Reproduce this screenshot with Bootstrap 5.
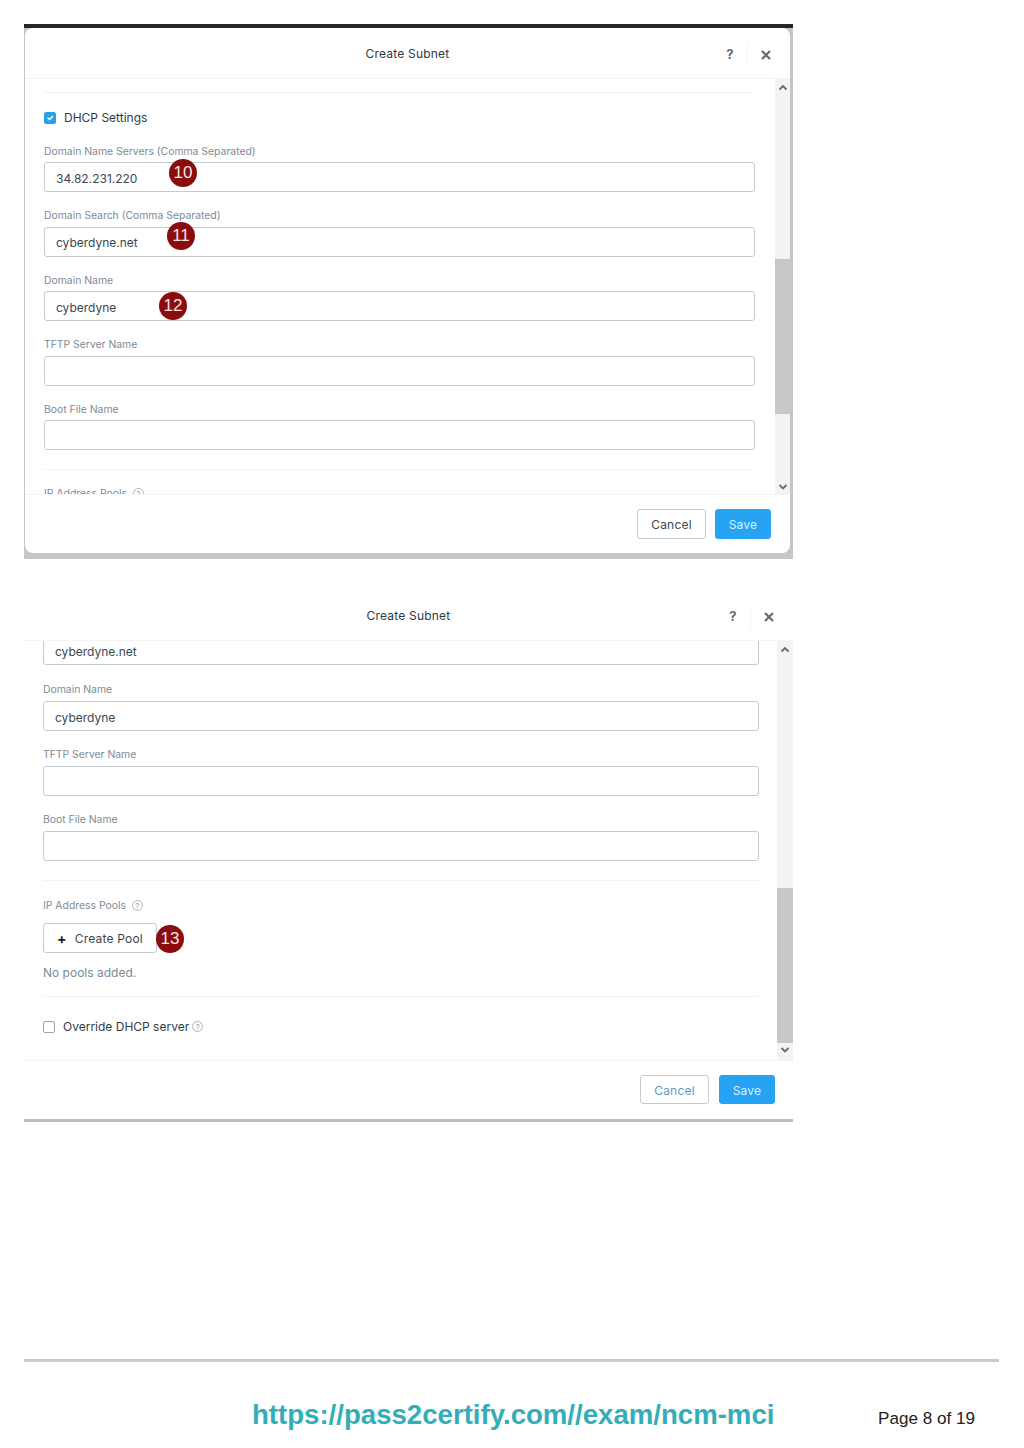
<!DOCTYPE html>
<html lang="en">
  <head>
    <meta charset="UTF-8" />
    <meta name="viewport" content="width=device-width, initial-scale=1.0" />
    <title>Create Subnet</title>
    <link
      href="https://cdn.jsdelivr.net/npm/bootstrap@5.3.0/dist/css/bootstrap.min.css"
      rel="stylesheet"
    />
    <style>
      body {
        font-family: Inter, "Liberation Sans", sans-serif;
        font-size: 12px;
        color: #3d4f5c;
        background: #fff;
      }
      .page-wrap {
        height: 1448px;
        padding: 24px 25px 0 24px;
      }
      /* first screenshot, with the dark bar and grey edge */
      .shot-one {
        width: 769px;
        height: 535px;
        padding: 0 3px 6px 1px;
        background: #c6c6c6;
        border-top: 4px solid #262626;
      }
      .shot-one .dialog-box {
        height: 525px;
        border-radius: 8px;
      }
      .shot-one .field-title {
        height: 17.5px;
      }
      .shot-two {
        width: 769px;
        height: 532px;
        margin-top: 31px;
        border-bottom: 3px solid #bdbdbd;
      }
      .dialog-box {
        background: #fff;
      }
      .dialog-head {
        height: 51px;
        padding-top: 2px;
        border-bottom: 1px solid #f2f4f5;
      }
      .dialog-title {
        font-size: 12px;
        color: #2b3a45;
        letter-spacing: 0.2px;
      }
      .head-tools {
        top: 2px;
        right: 19px;
        height: 50px;
      }
      .tool-help {
        width: 18px;
        font-size: 13px;
        font-weight: 700;
        color: #5f6d77;
        text-align: center;
      }
      .tool-sep {
        width: 1px;
        height: 22px;
        background: #f2f4f5;
      }
      .tool-close {
        margin-left: 5px;
      }
      .dialog-main {
        height: 415px;
      }
      .shot-two .dialog-main {
        height: 419px;
      }
      .form-area {
        flex: 1 1 auto;
        min-width: 0;
        padding: 0 20px 0 19px;
        overflow: hidden;
      }
      .shot-two .form-area {
        padding: 0 18px 0 19px;
      }
      .thin-rule {
        height: 1px;
        margin: 0;
        background: #f1f3f4;
        border: 0;
        opacity: 1;
      }
      .top-rule {
        margin-top: 13px;
        margin-bottom: 15px;
      }
      .check-row {
        height: 18px;
        margin-bottom: 15.75px;
        padding-top: 1px;
        color: #2f3d47;
      }
      .check-row .form-check-input {
        width: 12px;
        height: 12px;
        margin: 0 8px 0 0;
        border-color: #9aa5ad;
        border-radius: 2px;
      }
      .check-row .form-check-input:checked {
        background-color: #26a3e8;
        border-color: #26a3e8;
      }
      .override-row {
        margin-top: 20px;
      }
      .field-title {
        display: block;
        height: 18px;
        margin-bottom: 3px;
        font-size: 10.4px;
        line-height: 19px;
        color: #7d8b95;
      }
      .field-input {
        height: 30px;
        padding: 2px 11px 0;
        margin-bottom: 14px;
        font-size: 12px;
        color: #3a4751;
        border-color: #c4cbd0;
        border-radius: 3px;
        box-shadow: none;
      }
      .clip-input {
        margin-top: -6px;
        margin-bottom: 15px;
      }
      .last-input {
        margin-bottom: 19px;
      }
      .pools-title {
        margin-top: 14px;
      }
      .shot-two .pools-title {
        margin-top: 15px;
      }
      .shot-two .pools-title.mb-2 {
        margin-bottom: 9px !important;
      }
      .help-dot {
        display: inline-block;
        width: 11px;
        height: 11px;
        margin-left: 3px;
        font-size: 8px;
        line-height: 10px;
        text-align: center;
        color: #9aa5ad;
        vertical-align: 0;
        border: 1px solid #aab3ba;
        border-radius: 50%;
      }
      .step-dot {
        position: absolute;
        z-index: 2;
        width: 28px;
        height: 28px;
        font-family: "Liberation Sans", Arial, sans-serif;
        font-size: 17px;
        line-height: 27px;
        text-align: center;
        color: #f5e6e6;
        background: #8a0c0c;
        border-radius: 50%;
      }
      .add-btn {
        width: 114px;
        height: 30px;
        padding: 1px 0 0;
        font-size: 12px;
        color: #3a4751;
        letter-spacing: 0.2px;
        background: #fff;
        border: 1px solid #c4cbd0;
        border-radius: 3px;
      }
      .plus-sign {
        margin-right: 8px;
        font-size: 14px;
        font-weight: 700;
        line-height: 1;
        color: #222;
      }
      .empty-note {
        margin: 11px 0 14px;
        font-size: 12px;
        line-height: 18px;
        color: #7d8b95;
      }
      .bar-track {
        flex: 0 0 15px;
        width: 15px;
        background: #f3f3f3;
      }
      .shot-two .bar-track {
        flex-basis: 16px;
        width: 16px;
      }
      .bar-arrow {
        flex: 0 0 14px;
        height: 14px;
      }
      .bar-thumb {
        background: #c8c8c8;
      }
      .dialog-foot {
        height: 59px;
        padding: 14px 19px 0 0;
        border-top: 1px solid #f2f4f5;
      }
      .shot-two .dialog-foot {
        padding-right: 18px;
      }
      .foot-btn {
        width: 69px;
        height: 30px;
        padding: 2px 0 0;
        font-size: 12px;
        letter-spacing: 0.2px;
        color: #3a4751;
        background: #fff;
        border: 1px solid #c4cbd0;
        border-radius: 3px;
      }
      .shot-two .foot-btn {
        height: 29px;
        color: #5a9cc4;
      }
      .foot-save,
      .shot-two .foot-save {
        width: 56px;
        margin-left: 9px;
        color: #d9f0ff;
        background: #27a3f3;
        border-color: #27a3f3;
      }
      .shot-two .foot-save {
        margin-left: 10px;
      }
      .doc-foot {
        margin-top: 237px;
        padding-top: 36px;
        border-top: 3px solid #cbcbcb;
      }
      .doc-link {
        margin-left: 228px;
        font-family: "Liberation Sans", Arial, sans-serif;
        font-size: 27.6px;
        font-weight: 700;
        line-height: 34px;
        color: #33aeb8;
        text-decoration: none;
      }
      .doc-page {
        margin: 10px 24px 0 auto;
        font-family: "Liberation Sans", Arial, sans-serif;
        font-size: 17.1px;
        line-height: 22px;
        color: #222;
      }
    </style>
  </head>
  <body>
    <div class="page-wrap">
      <!-- first dialog -->
      <div class="shot-one">
        <div class="dialog-box">
          <div class="dialog-head position-relative d-flex align-items-center justify-content-center">
            <span class="dialog-title">Create Subnet</span>
            <div class="head-tools position-absolute d-flex align-items-center gap-2">
              <span class="tool-help">?</span>
              <span class="tool-sep"></span>
              <svg class="tool-close" width="10" height="10" viewBox="0 0 10 10"><path d="M1 1l8 8M9 1l-8 8" stroke="#5f6d77" stroke-width="2.2" fill="none"/></svg>
            </div>
          </div>
          <div class="dialog-main d-flex">
            <div class="form-area">
              <hr class="thin-rule top-rule" />
              <div class="check-row d-flex align-items-center">
                <input class="form-check-input" type="checkbox" checked />
                <span>DHCP Settings</span>
              </div>
              <div class="position-relative">
                <span class="step-dot" style="left: 125px; top: 17px">10</span>
                <label class="field-title">Domain Name Servers (Comma Separated)</label>
                <input class="form-control field-input" type="text" value="34.82.231.220" />
              </div>
              <div class="position-relative">
                <span class="step-dot" style="left: 123px; top: 16px">11</span>
                <label class="field-title">Domain Search (Comma Separated)</label>
                <input class="form-control field-input" type="text" value="cyberdyne.net" />
              </div>
              <div class="position-relative">
                <span class="step-dot" style="left: 115px; top: 21px">12</span>
                <label class="field-title">Domain Name</label>
                <input class="form-control field-input" type="text" value="cyberdyne" />
              </div>
              <label class="field-title">TFTP Server Name</label>
              <input class="form-control field-input" type="text" />
              <label class="field-title">Boot File Name</label>
              <input class="form-control field-input last-input" type="text" />
              <hr class="thin-rule" />
              <span class="field-title pools-title">IP Address Pools <span class="help-dot">?</span></span>
            </div>
            <div class="bar-track d-flex flex-column align-items-center">
              <svg class="bar-arrow mt-1" width="10" height="14" viewBox="0 0 10 14"><path d="M1.500 6.500L5 3l3.500 3.500" stroke="#5f6d77" stroke-width="1.800" fill="none"/></svg>
              <div class="bar-thumb w-100" style="height: 155px; margin-top: 162px"></div>
              <svg class="bar-arrow mt-auto" width="10" height="14" viewBox="0 0 10 14"><path d="M1.500 5L5 8.500 8.500 5" stroke="#5f6d77" stroke-width="1.800" fill="none"/></svg>
            </div>
          </div>
          <div class="dialog-foot d-flex justify-content-end align-items-start">
            <button class="btn foot-btn" type="button">Cancel</button>
            <button class="btn foot-btn foot-save" type="button">Save</button>
          </div>
        </div>
      </div>

      <!-- second dialog, scrolled further down -->
      <div class="shot-two">
        <div class="dialog-box">
          <div class="dialog-head position-relative d-flex align-items-center justify-content-center">
            <span class="dialog-title">Create Subnet</span>
            <div class="head-tools position-absolute d-flex align-items-center gap-2">
              <span class="tool-help">?</span>
              <span class="tool-sep"></span>
              <svg class="tool-close" width="10" height="10" viewBox="0 0 10 10"><path d="M1 1l8 8M9 1l-8 8" stroke="#5f6d77" stroke-width="2.2" fill="none"/></svg>
            </div>
          </div>
          <div class="dialog-main d-flex">
            <div class="form-area">
              <input class="form-control field-input clip-input" type="text" value="cyberdyne.net" />
              <label class="field-title">Domain Name</label>
              <input class="form-control field-input" type="text" value="cyberdyne" />
              <label class="field-title">TFTP Server Name</label>
              <input class="form-control field-input" type="text" />
              <label class="field-title">Boot File Name</label>
              <input class="form-control field-input last-input" type="text" />
              <hr class="thin-rule" />
              <span class="field-title pools-title mb-2">IP Address Pools <span class="help-dot">?</span></span>
              <div class="position-relative">
                <button class="btn add-btn d-flex align-items-center justify-content-center" type="button"><span class="plus-sign">+</span>Create Pool</button>
                <span class="step-dot" style="left: 113px; top: 2px">13</span>
              </div>
              <p class="empty-note">No pools added.</p>
              <hr class="thin-rule" />
              <div class="check-row override-row d-flex align-items-center">
                <input class="form-check-input" type="checkbox" />
                <span>Override DHCP server</span><span class="help-dot">?</span>
              </div>
            </div>
            <div class="bar-track d-flex flex-column align-items-center">
              <svg class="bar-arrow mt-1" width="10" height="14" viewBox="0 0 10 14"><path d="M1.500 6.500L5 3l3.500 3.500" stroke="#5f6d77" stroke-width="1.800" fill="none"/></svg>
              <div class="bar-thumb w-100" style="height: 155px; margin-top: 229px"></div>
              <svg class="bar-arrow" width="10" height="14" viewBox="0 0 10 14"><path d="M1.500 5L5 8.500 8.500 5" stroke="#5f6d77" stroke-width="1.800" fill="none"/></svg>
            </div>
          </div>
          <div class="dialog-foot d-flex justify-content-end align-items-start">
            <button class="btn foot-btn" type="button">Cancel</button>
            <button class="btn foot-btn foot-save" type="button">Save</button>
          </div>
        </div>
      </div>

      <div class="doc-foot d-flex">
        <a class="doc-link" href="#">https://pass2certify.com//exam/ncm-mci</a>
        <span class="doc-page">Page 8 of 19</span>
      </div>
    </div>

    <script src="https://cdn.jsdelivr.net/npm/bootstrap@5.3.0/dist/js/bootstrap.bundle.min.js"></script>
  </body>
</html>
